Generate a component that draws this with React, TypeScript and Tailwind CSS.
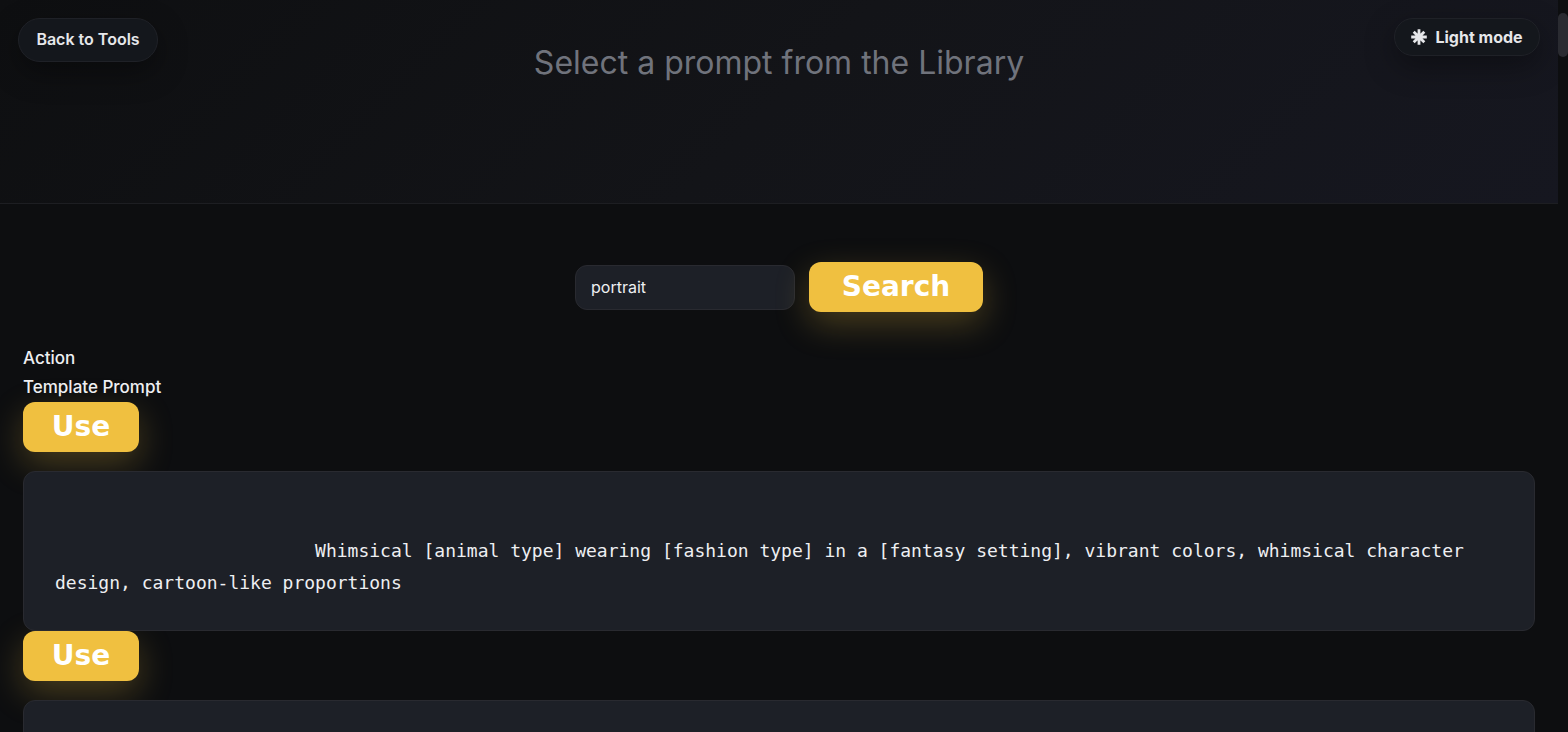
import { useState } from "react";

interface Prompt {
  id: string;
  text: string;
}

// The library stores prompts with their leading whitespace
const prompts: Prompt[] = [
  {
    id: "whimsical",
    text:
      "\n\n" +
      " ".repeat(24) +
      "Whimsical [animal type] wearing [fashion type] in a [fantasy setting], vibrant colors, whimsical character design, cartoon-like proportions",
  },
  { id: "blank", text: "\n\n" },
];

const glow = "shadow-[0_12px_34px_rgba(240,192,64,0.26)]";

function BurstIcon() {
  return (
    <svg
      width="16"
      height="16"
      viewBox="0 0 16 16"
      stroke="currentColor"
      strokeWidth="2.8"
      strokeLinecap="butt"
      aria-hidden="true"
    >
      <path d="M8 0.2v15.6M0.2 8h15.6M2.7 2.7l10.6 10.6M13.3 2.7L2.7 13.3" />
    </svg>
  );
}

function PromptRow({ prompt, onUse }: { prompt: Prompt; onUse: (text: string) => void }) {
  return (
    <tr className="block">
      <td className="block">
        <button
          type="button"
          onClick={() => onUse(prompt.text.trim())}
          className={`block h-[50px] w-[116px] rounded-xl bg-[#f0c040] text-[28px] leading-8 font-bold text-white font-['DejaVu_Sans',sans-serif] ${glow}`}
        >
          Use
        </button>
      </td>
      <td className="block pt-[19px]">
        <pre className="relative min-h-40 rounded-xl border border-[#292a30] bg-[#1d2027] p-[31px] text-[18px] leading-8 whitespace-pre-wrap text-[#eeeff2] font-['DejaVu_Sans_Mono',monospace]">
          {prompt.text.slice(1)}
        </pre>
      </td>
    </tr>
  );
}

export default function App() {
  const [selected, setSelected] = useState("");
  const [query, setQuery] = useState("portrait");

  return (
    <div className="flex h-screen overflow-hidden bg-[#0d0e10] text-[#eeeff2] font-['Inter',sans-serif]">
      <main className="min-w-0 flex-1 overflow-hidden">
        <header className="grid grid-cols-[1fr_auto_1fr] items-start border-b border-[#1d1e22] bg-linear-[135deg] from-[#0e0f11] via-[#131418] to-[#161720] px-[18px] pt-[18px]">
          <button
            type="button"
            className="h-11 w-[140px] rounded-full border border-[#1f2127] bg-[#14171c] pb-0.5 text-base font-semibold text-[#e6e7ea] shadow-[0_10px_30px_rgba(0,0,0,0.35)]"
          >
            Back to Tools
          </button>
          <textarea
            aria-label="Selected prompt"
            placeholder="Select a prompt from the Library"
            value={selected}
            onChange={(e) => setSelected(e.target.value)}
            className="mt-5 block h-[165px] w-[640px] resize-none bg-transparent text-center text-[32px] leading-[50px] outline-none placeholder:text-[#70737c]"
          />
          <button
            type="button"
            className="flex h-[38px] w-[146px] items-center justify-center gap-2 justify-self-end rounded-full border border-[#1f2127] bg-[#14171c] text-base font-bold text-[#e6e7ea] shadow-[0_10px_30px_rgba(0,0,0,0.35)]"
          >
            <BurstIcon />
            Light mode
          </button>
        </header>

        <section className="px-[23px] pt-[58px]">
          <form className="flex items-center justify-center gap-[14px]" onSubmit={(e) => e.preventDefault()}>
            <input
              type="text"
              aria-label="Search prompts"
              value={query}
              onChange={(e) => setQuery(e.target.value)}
              className="h-[45px] w-[220px] rounded-xl border border-[#292a30] bg-[#1d2027] px-[15px] text-base outline-none"
            />
            <button
              type="submit"
              className={`h-[50px] w-[174px] rounded-xl bg-[#f0c040] text-[28px] leading-8 font-bold text-white font-['DejaVu_Sans',sans-serif] ${glow}`}
            >
              Search
            </button>
          </form>

          <table className="mt-8 block text-[17px] leading-[29px]">
            <thead className="block">
              <tr className="block">
                <th className="block text-left font-medium">Action</th>
                <th className="block text-left font-medium">Template Prompt</th>
              </tr>
            </thead>
            <tbody className="block">
              {prompts.map((prompt) => (
                <PromptRow key={prompt.id} prompt={prompt} onUse={setSelected} />
              ))}
            </tbody>
          </table>
        </section>
      </main>

      {/* scroll track */}
      <div className="w-[10px] bg-[#0d0e10] pt-[13px]">
        <div className="h-11 rounded-full bg-[#2a2b31]" />
      </div>
    </div>
  );
}
